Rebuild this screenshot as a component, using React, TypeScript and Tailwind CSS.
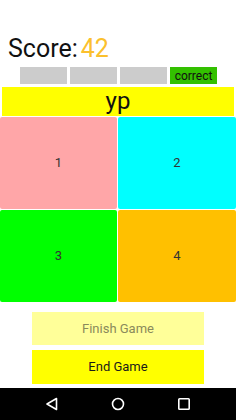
import React from 'react';

const font = { fontFamily: 'Roboto, "Noto Sans", sans-serif' };

const tiles = [
  { label: '1', bg: 'bg-[#ffa6a8]' },
  { label: '2', bg: 'bg-[#00ffff]' },
  { label: '3', bg: 'bg-[#00ff00]' },
  { label: '4', bg: 'bg-[#ffc000]' },
];

function NavBar() {
  return (
    <div className="h-[32px] bg-black flex items-center justify-between px-[45px]">
      {/* back */}
      <svg width="14" height="14" viewBox="0 0 14 14" fill="none">
        <path d="M11.5 1.5 L2 7 L11.5 12.5 Z" stroke="white" strokeWidth="1.6" strokeLinejoin="round" />
      </svg>
      {/* home */}
      <svg width="14" height="14" viewBox="0 0 14 14" fill="none">
        <circle cx="7" cy="7" r="5.5" stroke="white" strokeWidth="1.6" />
      </svg>
      {/* recents */}
      <svg width="14" height="14" viewBox="0 0 14 14" fill="none">
        <rect x="1.8" y="1.8" width="10.4" height="10.4" rx="0.8" stroke="white" strokeWidth="1.6" />
      </svg>
    </div>
  );
}

export default function App() {
  return (
    <div className="w-[236px] h-[420px] bg-white flex flex-col overflow-hidden" style={font}>
      {/* score */}
      <div className="pt-[34px] pl-[8px] flex items-center h-[64px] text-[25px] leading-[30px]">
        <span className="text-[#111]">Score:</span>
        <span className="ml-[3px] text-[#fbc02d]">42</span>
      </div>

      {/* answer slots */}
      <div className="mt-[3px] pl-[20px] flex gap-[3px] h-[17px]">
        <div className="w-[47px] bg-[#cccccc]" />
        <div className="w-[47px] bg-[#cccccc]" />
        <div className="w-[47px] bg-[#cccccc]" />
        <div className="w-[47px] bg-[#33c000] flex items-center justify-center text-[12px] leading-none text-[#111]">
          correct
        </div>
      </div>

      {/* word */}
      <div className="mt-[3px] mx-[2px] h-[29px] bg-[#ffff00] flex items-center justify-center text-[24px] leading-[29px] text-[#111]">
        yp
      </div>

      {/* tiles */}
      <div className="mt-[1px] grid grid-cols-[117px_118px] grid-rows-[92px_92px] gap-px">
        {tiles.map((t) => (
          <div
            key={t.label}
            className={`${t.bg} rounded-[2px] flex items-center justify-center text-[13px] text-[#333]`}
          >
            {t.label}
          </div>
        ))}
      </div>

      {/* buttons */}
      <div className="mt-[10px] flex flex-col items-center gap-[5px]">
        <div className="w-[172px] h-[33px] bg-[#ffff99] flex items-center justify-center text-[13px] text-[#8a8a5c]">
          Finish Game
        </div>
        <div className="w-[172px] h-[34px] bg-[#ffff00] flex items-center justify-center text-[13px] text-[#1a1a1a]">
          End Game
        </div>
      </div>

      <div className="flex-1" />
      <NavBar />
    </div>
  );
}
